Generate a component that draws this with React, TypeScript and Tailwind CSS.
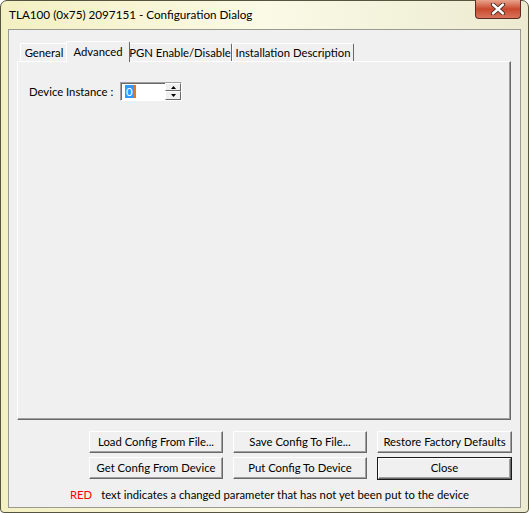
import React from "react";

const font = { fontFamily: 'Lato, "Noto Sans", sans-serif' };

const Btn = ({ children, def }: { children: React.ReactNode; def?: boolean }) => (
  <div className={def ? "border border-[#1a1a1a] h-[23px] mt-[2px]" : "h-[22px]"}>
    <div className="h-full flex items-center justify-center whitespace-nowrap bg-[#f0f0f0] border-t border-l border-t-white border-l-white border-r border-b border-r-[#696969] border-b-[#696969] shadow-[inset_-1px_-1px_0_#a0a0a0] text-[11.3px] text-black leading-none pb-[1px]">
      {children}
    </div>
  </div>
);

const Tab = ({ label, active, w }: { label: string; active?: boolean; w: string }) => (
  <div
    className={
      active
        ? `${w} h-[21px] -mx-[2px] relative z-10 bg-[#f0f0f0] border-t border-l border-t-white border-l-white border-r border-r-[#696969] rounded-t-[2px] flex items-start justify-center pt-[2px] text-[11.3px] whitespace-nowrap -mb-[1px]`
        : `${w} h-[18px] bg-[#f0f0f0] border-t border-l border-t-white border-l-white border-r border-r-[#696969] rounded-t-[2px] flex items-center justify-center pt-[1px] text-[11.3px] whitespace-nowrap`
    }
  >
    {label}
  </div>
);

export default function App() {
  return (
    <div className="w-[529px] h-[513px] bg-white" style={font}>
      <div className="w-[529px] h-[513px] rounded-t-[7px] rounded-b-[4px] border border-[#55553f] bg-gradient-to-r from-[#f3f0c2] via-[#fbfae6] to-[#ecead0] flex flex-col px-[7px] pb-[4px]">
        {/* title bar */}
        <div className="h-[28px] flex items-start justify-between">
          <div className="pt-[5px] pl-[1px] text-[11.7px] text-black whitespace-nowrap">TLA100 (0x75) 2097151 - Configuration Dialog</div>
          <div className="w-[46px] h-[19px] -mt-[1px] rounded-b-[4px] border border-t-0 border-[#5c2a20] bg-gradient-to-b from-[#e9a48e] via-[#c8482c] to-[#d9735a] flex items-center justify-center">
            <svg width="16" height="12" viewBox="0 0 16 12">
              <path d="M3 1.5 L13 10.5 M13 1.5 L3 10.5" stroke="#3b2a26" strokeWidth="4.2" strokeLinecap="round" />
              <path d="M3 1.5 L13 10.5 M13 1.5 L3 10.5" stroke="#ffffff" strokeWidth="2.4" strokeLinecap="round" />
            </svg>
          </div>
        </div>

        {/* client */}
        <div className="flex-1 bg-[#f0f0f0] border border-[#9a9a90] flex flex-col">
          {/* tabs */}
          <div className="mt-[11px] ml-[11px] flex h-[20px] items-end">
            <Tab label="General" w="w-[48px]" />
            <Tab label="Advanced" w="w-[64px]" active />
            <Tab label="PGN Enable/Disable" w="w-[104px]" />
            <Tab label="Installation Description" w="w-[122px]" />
          </div>
          <div className="ml-[8px] mr-[9px] h-[359px] border-t border-l border-t-white border-l-white border-r border-b border-r-[#696969] border-b-[#696969] shadow-[inset_-1px_-1px_0_#a0a0a0]">
            <div className="flex items-center mt-[20px] ml-[11px]">
              <span className="text-[11.3px] text-black w-[91px] whitespace-nowrap pt-[1px]">Device Instance :</span>
              <div className="w-[62px] h-[19px] bg-white border-t border-l border-t-[#a0a0a0] border-l-[#a0a0a0] border-r border-b border-r-white border-b-white shadow-[inset_1px_1px_0_#696969] flex items-center">
                <div className="flex-1 pl-[4px] flex items-center">
                  <span className="bg-[#3399ff] text-white text-[11.3px] leading-[13px] px-[1px] border-r-2 border-r-[#e07a2a]">0</span>
                </div>
                <div className="w-[16px] h-[17px] flex flex-col">
                  <div className="h-[8px] bg-[#f0f0f0] border-t border-l border-white border-r border-b border-r-[#696969] border-b-[#696969] flex items-center justify-center">
                    <svg width="5" height="3" viewBox="0 0 5 3"><path d="M0 3 L2.5 0 L5 3 Z" fill="#000" /></svg>
                  </div>
                  <div className="h-[9px] bg-[#f0f0f0] border-t border-l border-white border-r border-b border-r-[#696969] border-b-[#696969] flex items-center justify-center">
                    <svg width="5" height="3" viewBox="0 0 5 3"><path d="M0 0 L2.5 3 L5 0 Z" fill="#000" /></svg>
                  </div>
                </div>
              </div>
            </div>
          </div>

          {/* buttons */}
          <div className="mt-[11px] ml-[80px] mr-[8px] grid grid-cols-[134px_134px_135px] gap-x-[10px] gap-y-[4px] items-start">
            <Btn>Load Config From File...</Btn>
            <Btn>Save Config To File...</Btn>
            <Btn>Restore Factory Defaults</Btn>
            <Btn>Get Config From Device</Btn>
            <Btn>Put Config To Device</Btn>
            <div className="-mt-[2px]">
              <Btn def>Close</Btn>
            </div>
          </div>
          <div className="mt-[7px] ml-[61px] text-[11.3px] text-black whitespace-nowrap">
            <span className="text-[#ff0000]">RED</span>
            <span className="ml-[9px]">text indicates a changed parameter that has not yet been put to the device</span>
          </div>
        </div>
      </div>
    </div>
  );
}
